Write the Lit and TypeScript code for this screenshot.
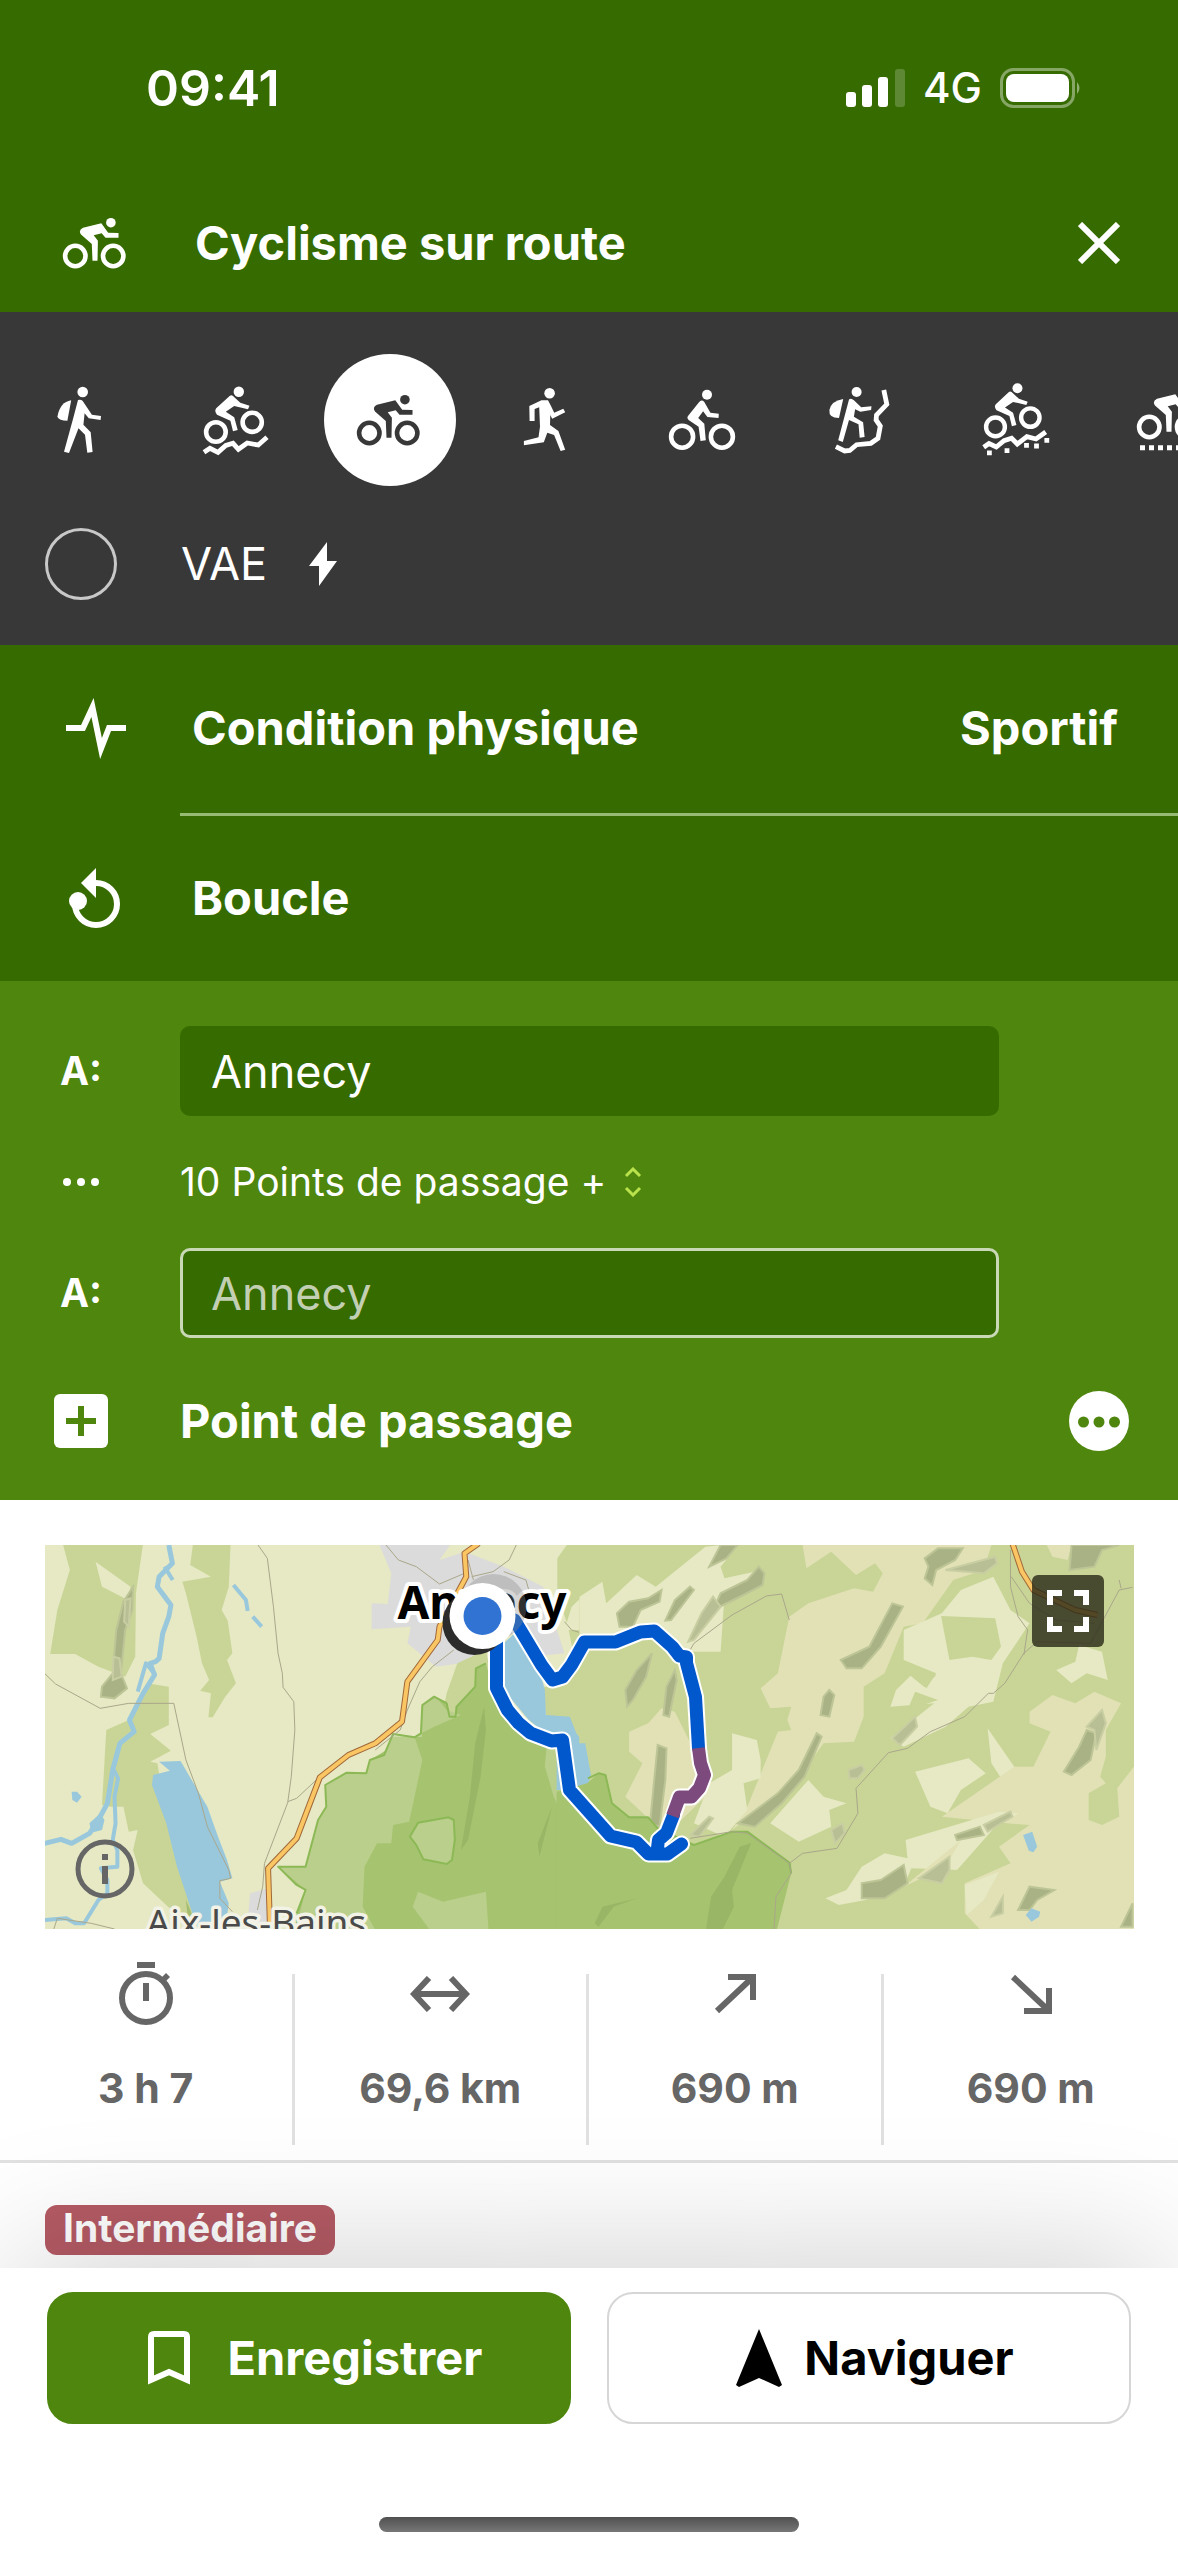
import { LitElement, html, css, svg } from "lit";
import { customElement, state } from "lit/decorators.js";

const mtbRider = svg`
  <circle cx="70.8" cy="37.7" r="5.2"/>
  <circle class="ring" cx="47.9" cy="78" r="9.8"/>
  <circle class="ring" cx="84.2" cy="68.3" r="9.6"/>
  <path d="M61.6 42Q63.2 40.5 64.7 41.7L72.3 48.7L81.5 51.7L80 55.3L66.2 52L57.8 57.7L66.2 63.3L69.7 76L65 77.3L62.4 66.7L49 60.7Q46 57 48.2 54.3Z"/>`;

const roadRider = svg`
  <circle class="ring" cx="45.3" cy="79" r="10.2"/>
  <circle class="ring" cx="83.2" cy="79" r="10.2"/>
  <circle cx="80.9" cy="45.7" r="4.8"/>
  <path d="M53 50.7L71.3 46.3L78.2 55.7L88.5 56V60.7H75.5L71.7 56.3L63.7 58.3L67.9 63.7L67.5 83.7H62.5L61.8 67L51 57.6Q48 53 53 50.7Z"/>`;

const activities = [
  {
    name: "Randonnée",
    art: svg`
      <circle cx="70.7" cy="38" r="5.3"/>
      <path d="M59.2 46.3Q48 48 45.4 62.7Q47 66.5 55.4 66.7Z"/>
      <path d="M66 46Q69 45 70.7 47L79.9 60.7L89 62L88.6 66L76.8 64.3L72.6 59.3L71.4 70.7L78.7 78.3L80.6 98L75.3 98.7L73 80.7L66.5 74.3L57 99L52 97.7L61 65Z"/>`,
  },
  {
    name: "VTT",
    art: svg`${mtbRider}
      <path class="trail" d="M36 98.3L42 94.3L50 98.3L57.8 91.5L65 89.3L70.4 95.3L79.2 89L90.3 91L99 83.3"/>`,
  },
  { name: "Cyclisme sur route", art: roadRider },
  {
    name: "Course à pied",
    art: svg`
      <circle cx="69.6" cy="39.3" r="5.3"/>
      <path d="M49.3 52L61.5 46.3H68L71 52L74.2 58.7L83.3 54.7L85.2 58.3L72.2 64.7L70.3 61L70 71L78.4 77L85.2 95.7L80.6 97L74.1 81L67.3 78.7L63.8 88.3L43.9 91.3V87L58.5 83.3L60 72.7L59.2 53.3L54.6 55V67H49.6Z"/>`,
  },
  {
    name: "Vélo",
    art: svg`
      <circle class="ring" cx="46.1" cy="82.7" r="11"/>
      <circle class="ring" cx="85.9" cy="82.7" r="11"/>
      <circle cx="71" cy="40.7" r="5"/>
      <path d="M62.8 48.5Q65.5 45 68.3 48L74.4 58.7L82.8 59.7L82.5 64L71.4 63L67.1 57.3L62.2 64L68.3 69.7L69.8 86.3L64.5 87L62.6 72.7L52.6 66Q50.5 64 51.8 62.3Z"/>`,
  },
  {
    name: "Alpinisme",
    art: svg`
      <circle cx="64.6" cy="38" r="5"/>
      <path d="M51.2 45Q39 47 37.4 56Q36.5 64 47 64Z"/>
      <path d="M57 45.5Q59 43.5 61.9 46.3L69.2 53.3L79.5 52.3L79.1 56L68.4 57.7L63.1 55.3L61.9 62.7L71.1 68.3L72.6 83L67.7 83.7L66.5 70.3L57 66L50.8 88L46.2 86.3Z"/>
      <path class="trail" d="M91.8 36L94.8 50.3L84.5 61L84.1 66L88.3 72L86 84.3L78.8 89.3L64.6 90.7L57.7 96.5L52.7 97L43.9 92.7"/>`,
  },
  {
    name: "VTT gravel",
    art: svg`<g transform="translate(1.5 -2) scale(.96)">${mtbRider}</g>
      <path class="trail" d="M35.7 93.3L41 89.5L48.3 93L56 86.7L63.6 84.3L69.3 90L78.9 82.7L88 85L97.7 78"/>
      <path d="M39 96.4h4.8v4.8h-4.8ZM56.6 94.3h4.8v4.8h-4.8ZM76.1 89h4.8v4.8h-4.8ZM86.1 89.6h4.8v4.8h-4.8ZM96.4 84h4.8v4.8h-4.8Z"/>`,
  },
  {
    name: "Gravel",
    art: svg`<g transform="translate(0 -6)">${roadRider}</g>
      <path d="M36 91.3h5v5h-5ZM45 91.3h5v5h-5ZM54 91.3h5v5h-5ZM63 91.3h5v5h-5ZM72 91.3h5v5h-5ZM81 91.3h5v5h-5ZM90 91.3h5v5h-5Z"/>`,
  },
];

const stats = [
  {
    label: "Durée",
    value: "3 h 7",
    icon: svg`<svg width="54" height="63" viewBox="0 0 54 63"><path d="M18 0h18v6H18ZM24 21h6v18h-6ZM42 16l5-5 4 4-5 5Z" fill="currentColor"/><circle cx="27" cy="36" r="24" fill="none" stroke="currentColor" stroke-width="6"/></svg>`,
  },
  {
    label: "Distance",
    value: "69,6 km",
    icon: svg`<svg width="60" height="36" viewBox="0 0 60 36" fill="none" stroke="currentColor" stroke-width="6"><path d="M5 18H55M19 2L4 18L19 34M41 2L56 18L41 34"/></svg>`,
  },
  {
    label: "Montée",
    value: "690 m",
    icon: svg`<svg width="42" height="40" viewBox="0 0 42 40" fill="none" stroke="currentColor" stroke-width="6"><path d="M3 37L37 5M14 3H39V26"/></svg>`,
  },
  {
    label: "Descente",
    value: "690 m",
    icon: svg`<svg width="42" height="40" viewBox="0 0 42 40" fill="none" stroke="currentColor" stroke-width="6"><path d="M3 3L37 35M39 14V37H14"/></svg>`,
  },
];

@customElement("route-map")
export class RouteMap extends LitElement {
  static styles = css`
    :host {
      display: block;
      position: relative;
      height: 384px;
      overflow: hidden;
      background: #e6e9c3;
    }
    .canvas { display: block; width: 100%; height: 100%; }
    .sheet * { vector-effect: non-scaling-stroke; }
    .wood { fill: #c8d596; }
    .tan { fill: #e1e1b5; }
    .light { fill: #e6e9c3; }
    .park { fill: #a6c370; }
    .meadow { fill: #bacf8b; }
    .water { fill: #99c8dc; }
    .town { fill: #dcdbdb; }
    .ridge { fill: #a9b284; stroke: #bdc597; stroke-width: 2; }
    .ridge-soft { fill: #b8bf94; stroke: #c9cea2; stroke-width: 2; }
    .ridge-park { fill: #93b061; opacity: .7; }
    .line { fill: none; stroke-linejoin: round; }
    .river { stroke: #99c8dc; stroke-width: 5; }
    .stream { stroke: #99c8dc; stroke-width: 4; }
    .border { stroke: #aaa78b; stroke-width: 1; }
    .edge { stroke: #8cb956; stroke-width: 2; }
    .road-case { stroke: #a0683a; stroke-width: 6; }
    .road { stroke: #fac563; stroke-width: 4; }
    .halo { stroke: #fff; stroke-width: 17; stroke-linecap: round; }
    .track { stroke: #0058cc; stroke-width: 13; stroke-linecap: round; }
    .steep { stroke: #7c4a7c; stroke-width: 13; }
    .city {
      font: 700 46px "Noto Sans", "Open Sans", sans-serif;
      fill: #000; stroke: #fff; stroke-width: 8; stroke-linejoin: round; paint-order: stroke;
    }
    .place {
      font: 400 37px "Noto Sans", "Open Sans", sans-serif;
      fill: #4a4a4a; stroke: #f2f2e6; stroke-width: 7; stroke-linejoin: round; paint-order: stroke;
    }
    .control {
      position: absolute; padding: 0; border: 0; background: none;
      display: grid; place-items: center; cursor: pointer;
    }
    .control svg { display: block; }
    .info { left: 30px; bottom: 30px; width: 60px; height: 60px; color: #666; }
    .expand {
      right: 30px; top: 30px; width: 72px; height: 72px;
      border-radius: 6px; background: rgba(41, 40, 22, .8); color: #fff;
    }
  `;

  render() {
    return html`
      <svg class="canvas" viewBox="0 0 1090 384" preserveAspectRatio="xMidYMid slice" role="img" aria-label="Carte du parcours autour d'Annecy">
        <g class="sheet" transform="translate(-5 -15) scale(.35714 .33333)">
          <path class="wood" d="M65 40H290L270 190L268 380L240 440L165 410L100 372L30 372L50 240L85 120ZM430 40H535L530 170L510 240L527 272L540 370L525 390L550 460L520 500L485 562H473L480 490L450 482L475 450L455 400L440 320L410 190L400 155L480 140L422 105Z"/>
          <path class="light" d="M157 95L255 170L248 210L175 170Z"/>
          <path class="wood" d="M300 460L362 470V585L310 612L368 662L310 695L330 700L350 830L390 1010L420 1110L440 1200L360 1130L290 1060L262 960L275 900L250 905L235 830L200 830L175 825L187 600L250 570Z"/>
          <path class="ridge" d="M262 170L235 215L215 300L205 430L175 470L172 500L210 505L245 475L228 430L240 300L260 240Z"/>
          <path class="ridge-soft" d="M240 210L255 205L250 290L237 275ZM207 380L224 385L230 440L205 450Z"/>
          <path class="water" d="M335 695L395 693L415 730L470 830L500 920L525 990L540 1045L505 1055L530 1120L520 1200H445L425 1140L385 1010L355 880L315 765L318 735L365 722Z"/>
          <path class="water" d="M90 785L105 785L118 800L105 818L92 810ZM140 880L170 850L182 870L175 900L145 908Z"/>
          <path class="town" d="M950 40L1150 45L1120 90L1190 65L1300 110L1410 170L1470 370L1380 380L1350 300L1240 350L1210 395L1110 410L1030 340L1040 290L930 298L930 220L975 222L985 130ZM590 1090L640 1075V1150L650 1200H580Z"/>
          <path class="wood" d="M1170 400L1250 360L1270 470L1230 600H1120L1140 490ZM1450 85L1480 40H1700V900L1540 760L1420 560L1405 470L1440 470L1500 400L1480 290L1450 190Z"/>
          <path class="light" d="M1568 150L1490 230L1470 300H1568Z"/>
          <path class="park" d="M1250 400L1220 415L1220 470L1165 530V560H1148L1140 515L1105 500L1072 525L1070 620L990 620L980 655L925 690L915 730L860 728L800 765L803 830L780 870L745 1010L668 1010L720 1065L745 1080L720 1150L715 1210H1640V740L1540 745L1530 770L1480 780L1450 650L1330 590L1270 480Z"/>
          <path class="meadow" d="M1110 500L1070 530V620H990L965 675L925 690L915 730L860 728L800 765L803 830L780 870L745 1010L668 1010L745 1080L715 1210L940 1200L905 1130L910 1010L945 940L985 940L990 885L1035 875L1072 690L1050 620L1105 590L1180 555L1140 540ZM1060 1085L1130 1115L1250 1085L1258 1210H1100L1045 1130ZM1420 650L1450 650L1470 800L1560 890L1495 930L1440 800L1415 710Z"/>
          <path class="meadow" stroke="#8cb956" stroke-width="2" d="M1060 878L1145 862L1160 870L1163 930L1155 990L1140 1002L1075 988L1055 945L1037 920Z"/>
          <path class="ridge-park" d="M1245 530L1250 600L1235 740L1200 930L1180 960L1205 800L1220 640ZM1480 960L1505 1020L1500 1120L1485 1130L1465 1060ZM1435 830L1400 980L1395 940ZM410 1110L430 1160H415Z"/>
          <path class="water" d="M1300 340L1340 300L1400 420L1415 480L1418 555L1485 560L1503 610L1525 640L1545 735L1530 770L1500 782L1480 620L1430 620L1370 570L1300 480Z"/>
          <path class="line edge" d="M1250 400L1222 415L1220 470L1168 530L1165 560H1148L1140 520L1105 500L1072 525L1068 610L1050 622L990 612L965 675L925 690L915 730L860 728L800 765L803 830L780 870L745 1010L668 1010L720 1065L745 1080L720 1150"/>
          <path class="line river" d="M362 45L372 100L335 140L330 170L368 225L362 260L345 310L335 385L325 395L310 400L322 435L290 490L252 570L265 605L225 640L205 720L190 820L165 870L140 910L90 940L60 928L14 940"/>
          <path class="line stream" d="M350 110L373 150M275 485L298 400L325 435M208 720L220 745L210 800L213 880L205 930L218 960V1010L172 1015L190 1050V1090L165 1110L125 1180L100 1180L75 1165L14 1170M543 165L578 210L583 243M597 260L622 290"/>
          <path class="line border" d="M14 430L45 462L170 535L250 520L376 520L410 690L445 790L470 890L530 1020L535 1045L505 1052V1105L540 1145M612 45L638 85L655 230L668 370L680 430L682 472L712 515L715 600L705 740L695 818L630 1000L625 1070L610 1140M695 815L720 805L780 745M970 45L1005 90L1055 110L1120 162L1190 130M1335 45L1315 90L1270 125L1210 140M1200 90L1215 150M1300 125L1362 150L1370 180M1470 275L1490 300L1520 310M1160 360L1100 410L1065 455L1030 540L1010 600L940 660M40 1197L50 1165L145 1180L210 1197"/>
          <path class="line road-case" d="M1230 40L1190 70L1195 140L1175 180L1120 290L1115 330L1030 455L1015 575L940 640L865 675L785 742L720 925L640 1015L646 1210"/>
          <path class="line road" d="M1230 40L1190 70L1195 140L1175 180L1120 290L1115 330L1030 455L1015 575L940 640L865 675L785 742L720 925L640 1015L646 1210"/>
        </g>
        <g class="sheet" transform="translate(535 -15) scale(.3814 .33333)">
          <path class="wood" d="M0 40H1460V1210H0V770Z"/>
          <path class="light" d="M60 155L70 220L150 135L200 170L330 50L420 40L370 110L380 145L480 120V160L380 200L370 365H290L270 400L150 290L0 410V200Z"/>
          <path class="wood" d="M0 330L100 330L200 290L270 400L290 640L200 700L60 720L0 640Z"/>
          <path class="tan" d="M585 45H1080L1060 120L980 150L900 280L850 290L800 430L745 470V560L720 635L640 640L570 750L400 900L440 830L520 605L555 600L545 570L555 530L500 535L475 475L520 430L550 260L600 220L720 175L770 185L795 130L775 100L725 135L660 65L595 115Z"/>
          <path class="tan" d="M215 535L250 545L300 660L330 800L240 900L185 870L120 800L165 700L130 665L130 605L180 580Z"/>
          <path class="light" d="M1000 180L1085 140L1130 240L1180 280L1110 400L1085 515L1020 530L960 590L850 650L815 625L930 520L815 530L830 480L870 435L910 475L935 430L850 390V300L950 250Z"/>
          <path class="wood" d="M948 258L1090 265L1105 350L1080 390L1030 380L970 390ZM880 485L940 510L860 540ZM845 392L935 435L905 472L860 430L800 450Z"/>
          <path class="light" d="M400 610L465 630L475 690V745L430 760L440 840L380 920L300 880L340 760L400 720ZM600 750L640 800L700 820L655 840L660 890L575 935L500 880ZM1310 345L1370 365L1385 450L1330 430L1290 460L1250 420L1300 395ZM880 725L1020 685L1065 730L1000 780L965 850L920 830ZM1070 595L1140 710L1120 770L1080 700Z"/>
          <path class="tan" d="M1180 545L1240 495L1300 520L1350 485L1420 520L1380 600V680L1365 740L1380 760L1335 790V870L1370 885L1415 860L1410 775L1460 700V1210H1060L1010 1150L1010 1060L1130 1000L1100 950L1180 885L1120 880L950 860L1140 710L1190 710L1235 605L1180 580Z"/>
          <path class="light" d="M855 930L1000 880L1100 845L1150 850L1090 890L990 1020L870 1015L850 1070L750 1110L680 1125L645 1105L700 1080L740 1010L800 970L860 985ZM1010 1065L1100 1025L1060 1110L1015 1155Z"/>
          <path class="tan" d="M1225 45H1290L1280 90L1240 80ZM850 1070L1000 930L960 1010Z"/>
          <path class="ridge" d="M370 45H415L385 85L340 110ZM470 110L485 130L480 165L430 195L350 240L370 190L440 150ZM130 215L180 205L215 180L210 215L160 240L140 290L105 290L98 250ZM290 170L300 180L240 270L225 272L250 210ZM820 220L848 230L790 350L740 415L700 415L685 390L760 350ZM940 55H1005L985 90L935 120L925 165L905 145L915 110L905 85ZM655 480L668 495L655 560L632 555L640 500ZM622 610L635 620L590 740L530 820L460 890L415 880L520 790L575 720ZM190 370L175 440L140 510L125 530L120 480L150 420ZM250 420L255 450L235 560L220 555L228 470ZM205 645L228 655L225 750L210 890L185 880L195 760Z"/>
          <path class="ridge" d="M1330 600L1355 610L1340 690L1290 735L1270 725L1310 650ZM1290 45H1415L1370 60L1350 110L1285 120ZM740 1060L790 1050L850 1005L860 1060L800 1105H740ZM985 915L1050 890L1060 915L990 930ZM1150 1140L1180 1070L1245 1080L1200 1110L1180 1140ZM1450 1120V1190H1420Z"/>
          <path class="ridge-soft" d="M350 200L370 230L300 330L285 335L320 250ZM1370 540L1380 580L1355 660L1350 600L1330 590ZM1060 885L1130 845L1135 860L1070 905ZM1090 80L1095 100L1060 130L960 120ZM880 560L885 590L840 645L820 625ZM340 860L350 865L315 920L290 915ZM705 720L740 705L748 720L730 745H708ZM660 900L690 880L695 910L670 940ZM970 980V1020L950 1060L890 1045ZM1110 1100V1150L1080 1160Z"/>
          <path class="water" d="M-60 640L15 640L30 735L22 765L0 780H-60ZM1163 915L1187 905L1200 950L1190 967L1178 962ZM1170 1155L1185 1135L1208 1145L1205 1160L1185 1175Z"/>
          <path class="park" d="M-60 785L20 760L50 730L70 735L85 820L130 862L180 862L205 895L300 945L400 905L440 905L555 1000V1030L515 1210H-60Z"/>
          <path class="ridge-park" d="M450 940L400 1080L405 1130L370 1210H330L345 1100L380 1040L420 950ZM150 1105L90 1130L50 1190L40 1180L60 1130Z"/>
          <path class="line edge" d="M22 745L50 730L68 735L85 820L130 862H180L205 895L300 945L400 905H440L550 998L555 1030"/>
          <path class="line border" d="M270 400L300 340L400 255L490 198L530 192L550 270M290 925L400 905L440 910L550 1000L555 1030L515 1100L510 1200M550 1000L585 970L675 955L730 850L725 775L810 668L860 655L920 605L1010 560L1072 490H1085L1115 460L1165 370L1200 335L1340 340L1415 180L1450 172M1415 150L1420 175M1130 60V170L1150 260L1175 300L1165 375M1132 140L1180 220L1250 270L1350 280"/>
          <path class="line road-case" d="M1135 40L1160 125L1190 180L1300 240L1358 255"/>
          <path class="line road" d="M1135 40L1160 125L1190 180L1300 240L1358 255"/>
        </g>
        <text class="city" x="353" y="74">Annecy</text>
        <text class="place" x="102" y="391">Aix-les-Bains</text>
        <path class="line halo" d="M452 80V143L463 165L474 178L486 188L507 196L518 195L525 245L566 291L592 297L604 309H623L637 299M613 303L614 295L622 288L629 270L635 252L647 252L655 243L660 230L656 218L654 203L651 152L642 118L642 112L635 111L628 102L610 86L596 87L571 97H540L527 120L518 132L508 135L497 120L470 75"/>
        <path class="line track" d="M452 80V143L463 165L474 178L486 188L507 196L518 195L525 245L566 291L592 297L604 309H623L637 299M613 303L614 295L622 288L629 270M654 203L651 152L642 118L642 112L635 111L628 102L610 86L596 87L571 97H540L527 120L518 132L508 135L497 120L470 75"/>
        <path class="line steep" d="M628 271L635 252L647 252L655 243L660 230L656 218L654 203"/>
        <circle cx="449" cy="62" r="33" fill="#8a8a8a" opacity=".35"/>
        <circle cx="430" cy="78" r="32" fill="#2c2c2c"/>
        <circle cx="438" cy="71" r="33" fill="#fff"/>
        <circle cx="438" cy="71" r="19" fill="#3073d3"/>
      </svg>
      <button class="control info" aria-label="Informations sur la carte">
        <svg width="60" height="60" viewBox="0 0 60 60" fill="currentColor"><circle cx="30" cy="30" r="27" fill="none" stroke="currentColor" stroke-width="5"/><path d="M27 15h6v6h-6ZM27 27h6v18h-6Z"/></svg>
      </button>
      <button class="control expand" aria-label="Plein écran">
        <svg width="42" height="42" viewBox="0 0 42 42" fill="none" stroke="currentColor" stroke-width="6"><path d="M3 15V3H15M27 3H39V15M39 27V39H27M15 39H3V27"/></svg>
      </button>
    `;
  }
}

@customElement("app-root")
export class AppRoot extends LitElement {
  @state() private selected = 2;

  static styles = css`
    :host {
      display: flex;
      flex-direction: column;
      min-height: 100vh;
      overflow: hidden;
      background: #fff;
      color: #fff;
      font-family: Inter, "Liberation Sans", sans-serif;
      font-size: 45px;
      line-height: 56px;
    }
    * { box-sizing: border-box; }
    button, input { font: inherit; color: inherit; }
    button { padding: 0; border: 0; background: none; cursor: pointer; }
    svg { display: block; flex: none; }
    .strong { font-size: 47px; font-weight: 700; }

    .top { background: #366b00; }
    .status {
      display: flex; align-items: center; height: 176px;
      padding: 0 96px 0 146px;
    }
    .clock { flex: 1; font-size: 50px; font-weight: 600; }
    .network { font-size: 42px; font-weight: 500; margin: 0 18px 0 17px; }
    .title-bar { display: flex; align-items: center; height: 136px; padding: 0 58px 2px 62px; }
    .title-bar h1 { flex: 1; margin: 0 0 0 68px; }

    .figure { fill: currentColor; }
    .ring { fill: none; stroke: currentColor; stroke-width: 4.6; }
    .trail { fill: none; stroke: currentColor; stroke-width: 4.8; }

    .sports { background: #383838; padding: 42px 0 45px; }
    .carousel { display: flex; gap: 24px; padding-left: 12px; overflow: hidden; }
    .sport { flex: none; width: 132px; height: 132px; border-radius: 50%; }
    .sport.active { background: #fff; color: #383838; }
    .ebike { display: flex; align-items: center; margin-top: 42px; padding-left: 45px; }
    .ebike input {
      appearance: none; width: 72px; height: 72px; margin: 0 64px 0 0;
      border: 3px solid #c8c8c8; border-radius: 50%;
    }
    .ebike input:checked { background: #fff; }
    .ebike svg { margin-left: 42px; }

    .options { background: #366b00; }
    .option {
      display: grid; grid-template-columns: 192px 1fr auto; align-items: center;
      width: 100%; height: 165px; padding: 0 60px 2px 0; text-align: left;
    }
    .option.first { height: 168px; }
    .option .glyph { justify-self: center; }
    .rule { margin: 0 0 0 180px; border: 0; border-top: 3px solid #97bb72; }

    .route { background: #4e860e; padding: 45px 0 49px; }
    .stop { display: grid; grid-template-columns: 162px 1fr; align-items: center; padding-right: 179px; }
    .stop label, .stop .glyph { justify-self: center; }
    .stop label { font-size: 39px; font-weight: 700; }
    .stop, .via, .add { column-gap: 18px; }
    .stop input {
      width: 100%; height: 90px; padding: 0 28px; border: 3px solid #366b00;
      border-radius: 10px; background: #366b00; outline: 0;
    }
    .stop input::placeholder { color: #c3cfb3; opacity: 1; }
    .stop input.empty { border-color: #c9d9b5; }
    .via {
      display: grid; grid-template-columns: 162px auto auto 1fr; align-items: center;
      width: 100%; height: 132px; text-align: left; font-size: 39px;
    }
    .via .glyph, .add .glyph { justify-self: center; }
    .add-row { display: flex; align-items: center; justify-content: space-between; height: 60px; margin-top: 53px; padding-right: 49px; }
    .add { display: grid; grid-template-columns: 162px auto; align-items: center; }

    .result { padding-top: 45px; }
    .result route-map { margin: 0 44px 0 45px; }
    .stats { display: grid; grid-template-columns: repeat(4, 1fr); margin: 45px 0 15px; color: #666; }
    .stat {
      display: flex; flex-direction: column; align-items: center;
      height: 171px; margin: 0; border-right: 3px solid #e1e1e1;
    }
    .stat:last-child { border-right: 0; }
    .stat dt { display: grid; place-items: center; height: 63px; margin-top: -12px; }
    .stat dd { margin: 36px 0 0; font-size: 41px; line-height: 54px; font-weight: 700; white-space: nowrap; }
    .grade { border-top: 3px solid #e1e1e1; padding: 42px 45px 13px; }
    .badge {
      display: block; width: fit-content; height: 50px; padding: 0 18px; border-radius: 12px;
      background: #b55b65; color: #fff; font-size: 39px; line-height: 46px; font-weight: 700;
    }

    .dock {
      position: relative; flex: 1; background: #fff; color: #000;
      display: flex; flex-direction: column; justify-content: space-between;
      box-shadow: 0 -20px 150px -20px rgba(0, 0, 0, .22);
      padding: 24px 47px;
    }
    .actions { display: grid; grid-template-columns: 1fr 1fr; gap: 36px; }
    .action {
      display: flex; align-items: center; justify-content: center; height: 132px;
      padding-left: 12px; border: 2px solid #d6d6d6; border-radius: 26px; gap: 22px;
    }
    .action.primary { background: #4e860e; border-color: #4e860e; color: #fff; gap: 38px; }
    .home { align-self: center; width: 420px; height: 15px; border-radius: 8px; background: linear-gradient(#505050, #777); }
  `;

  render() {
    return html`
      <header class="top">
        <div class="status">
          <span class="clock">09:41</span>
          <svg width="60" height="38" viewBox="0 0 60 38" fill="#fff" aria-hidden="true">
            <rect y="23" width="10" height="15" rx="3"/><rect x="16" y="16" width="10" height="22" rx="3"/>
            <rect x="32" y="8" width="10" height="30" rx="3"/><rect x="49" width="10" height="38" rx="3" opacity=".2"/>
          </svg>
          <span class="network">4G</span>
          <svg width="82" height="40" viewBox="0 0 82 40" aria-hidden="true">
            <rect x="1.5" y="1.5" width="72" height="37" rx="12" fill="none" stroke="#fff" stroke-width="3" opacity=".4"/>
            <rect x="6" y="6" width="63" height="28" rx="8" fill="#fff"/>
            <path d="M77 14Q82 20 77 26Z" fill="#fff" opacity=".45"/>
          </svg>
        </div>
        <div class="title-bar">
          <svg class="figure" width="65" height="53" viewBox="32 40 65 53" aria-hidden="true">${roadRider}</svg>
          <h1 class="strong">Cyclisme sur route</h1>
          <button aria-label="Fermer">
            <svg width="42" height="42" viewBox="0 0 42 42" stroke="currentColor" stroke-width="6"><path d="M2 2L40 40M40 2L2 40"/></svg>
          </button>
        </div>
      </header>

      <section class="sports">
        <div class="carousel">
          ${activities.map(
            (a, i) => html`<button
              class=${i === this.selected ? "sport active" : "sport"}
              aria-label=${a.name}
              aria-pressed=${i === this.selected}
              @click=${() => (this.selected = i)}
            ><svg class="figure" width="132" height="132" viewBox="0 0 132 132">${a.art}</svg></button>`
          )}
        </div>
        <div class="ebike">
          <input id="ebike" type="checkbox" />
          <label for="ebike">VAE</label>
          <svg width="28" height="44" viewBox="0 0 28 44" fill="currentColor" aria-hidden="true"><path d="M18 0V19H28L10 44V24H0Z"/></svg>
        </div>
      </section>

      <section class="options">
        <button class="option first strong">
          <svg class="glyph" width="60" height="62" viewBox="0 0 60 62" fill="none" stroke="currentColor" stroke-width="6" stroke-miterlimit="10"><path d="M0 31H17L26.500 10.500L35 51.500L43 31H60"/></svg>
          <span>Condition physique</span>
          <span>Sportif</span>
        </button>
        <hr class="rule" />
        <button class="option strong">
          <svg class="glyph" width="54" height="60" viewBox="0 0 54 60" fill="currentColor"><path d="M27 0V30L12 15Z"/><circle cx="9" cy="33" r="9"/><path d="M27 15A21 21 0 1 1 6 36" fill="none" stroke="currentColor" stroke-width="6"/></svg>
          <span>Boucle</span>
        </button>
      </section>

      <section class="route">
        <div class="stop">
          <label for="from">A:</label>
          <input id="from" type="text" value="Annecy" />
        </div>
        <button class="via">
          <svg class="glyph" width="36" height="8" viewBox="0 0 36 8" fill="currentColor"><circle cx="4" cy="4" r="4"/><circle cx="18" cy="4" r="4"/><circle cx="32" cy="4" r="4"/></svg>
          <span>10 Points de passage +</span>
          <svg width="18" height="30" viewBox="0 0 18 30" fill="none" stroke="#b9e24c" stroke-width="3"><path d="M2 9L9 2L16 9M2 21L9 28L16 21"/></svg>
        </button>
        <div class="stop">
          <label for="to">A:</label>
          <input id="to" class="empty" type="text" placeholder="Annecy" />
        </div>
        <div class="add-row">
          <button class="add strong">
            <svg class="glyph" width="54" height="54" viewBox="0 0 54 54"><rect width="54" height="54" rx="6" fill="#fff"/><path d="M12 27H42M27 12V42" stroke="#4e860e" stroke-width="6"/></svg>
            <span>Point de passage</span>
          </button>
          <button aria-label="Plus d'options">
            <svg width="60" height="60" viewBox="0 0 60 60"><circle cx="30" cy="30" r="30" fill="#fff"/><g fill="#4e860e"><circle cx="14.500" cy="31" r="5.500"/><circle cx="30" cy="31" r="5.500"/><circle cx="45.500" cy="31" r="5.500"/></g></svg>
          </button>
        </div>
      </section>

      <main class="result">
        <route-map></route-map>
        <dl class="stats">
          ${stats.map(
            (s) => html`<div class="stat"><dt aria-label=${s.label}>${s.icon}</dt><dd>${s.value}</dd></div>`
          )}
        </dl>
        <div class="grade"><span class="badge">Intermédiaire</span></div>
      </main>

      <footer class="dock">
        <div class="actions">
          <button class="action primary strong">
            <svg width="42" height="54" viewBox="0 0 42 54" fill="none" stroke="currentColor" stroke-width="6"><path d="M3 49V6Q3 3 6 3H36Q39 3 39 6V49L21 41Z"/></svg>
            <span>Enregistrer</span>
          </button>
          <button class="action strong">
            <svg width="46" height="58" viewBox="0 0 46 58" fill="currentColor"><path d="M23 0L46 56L43 58L23 49L3 58L0 56Z"/></svg>
            <span>Naviguer</span>
          </button>
        </div>
        <div class="home"></div>
      </footer>
    `;
  }
}
